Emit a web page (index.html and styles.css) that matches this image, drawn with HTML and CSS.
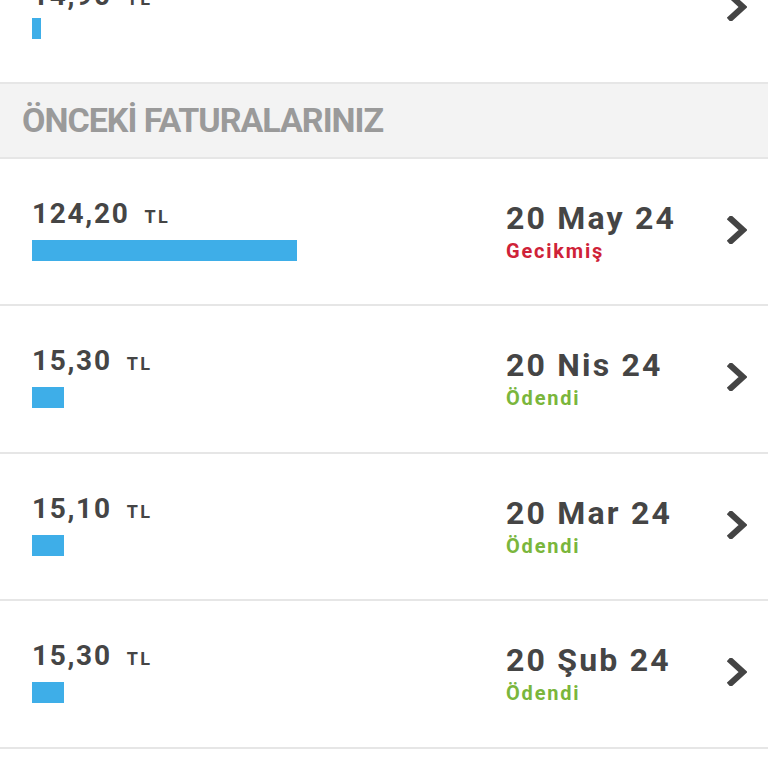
FILE: index.html
```html
<!DOCTYPE html>
<html lang="tr">
<head>
<meta charset="utf-8">
<link rel="stylesheet" href="styles.css">
</head>
<body>
<div class="list">
  <div class="row current">
    <div class="left">
      <div class="amount"><span class="num">14,90</span><span class="cur">TL</span></div>
      <div class="bar" style="width:9px"></div>
    </div>
    <div class="right"></div>
    <svg class="chev" viewBox="0 0 20 28"><path d="M4 3 L16 14 L4 25" /></svg>
  </div>
  <div class="section">ÖNCEKİ FATURALARINIZ</div>
  <div class="row">
    <div class="left">
      <div class="amount"><span class="num">124,20</span><span class="cur">TL</span></div>
      <div class="bar" style="width:265px"></div>
    </div>
    <div class="right">
      <div class="date">20 May 24</div>
      <div class="status late">Gecikmiş</div>
    </div>
    <svg class="chev" viewBox="0 0 20 28"><path d="M4 3 L16 14 L4 25" /></svg>
  </div>
  <div class="row">
    <div class="left">
      <div class="amount"><span class="num">15,30</span><span class="cur">TL</span></div>
      <div class="bar" style="width:32px"></div>
    </div>
    <div class="right">
      <div class="date">20 Nis 24</div>
      <div class="status paid">Ödendi</div>
    </div>
    <svg class="chev" viewBox="0 0 20 28"><path d="M4 3 L16 14 L4 25" /></svg>
  </div>
  <div class="row">
    <div class="left">
      <div class="amount"><span class="num">15,10</span><span class="cur">TL</span></div>
      <div class="bar" style="width:32px"></div>
    </div>
    <div class="right">
      <div class="date">20 Mar 24</div>
      <div class="status paid">Ödendi</div>
    </div>
    <svg class="chev" viewBox="0 0 20 28"><path d="M4 3 L16 14 L4 25" /></svg>
  </div>
  <div class="row">
    <div class="left">
      <div class="amount"><span class="num">15,30</span><span class="cur">TL</span></div>
      <div class="bar" style="width:32px"></div>
    </div>
    <div class="right">
      <div class="date">20 Şub 24</div>
      <div class="status paid">Ödendi</div>
    </div>
    <svg class="chev" viewBox="0 0 20 28"><path d="M4 3 L16 14 L4 25" /></svg>
  </div>
</div>
</body>
</html>
```

FILE: styles.css
```css
html, body {
  margin: 0;
  padding: 0;
  background: #ffffff;
  font-family: Roboto, "Noto Sans", sans-serif;
  color: #454545;
  overflow: hidden;
}
.list {
  margin-top: -64px;
}
.row {
  height: 145.5px;
  border-bottom: 2px solid #e6e6e6;
  display: flex;
  align-items: flex-start;
  padding: 0 21px 0 32px;
}
.left {
  flex: 1;
  display: flex;
  flex-direction: column;
  align-items: flex-start;
  padding-top: 41px;
}
.amount {
  display: flex;
  align-items: baseline;
  height: 28px;
  line-height: 28px;
  margin-bottom: 12px;
}
.current .left {
  padding-top: 46px;
}
.current .amount {
  margin-bottom: 8px;
}
.num {
  font-size: 28px;
  font-weight: 700;
  letter-spacing: 1.7px;
}
.cur {
  font-size: 18px;
  font-weight: 700;
  margin-left: 15px;
  letter-spacing: 2.5px;
}
.bar {
  height: 21px;
  background: #3eaee8;
}
.right {
  width: 221px;
  display: flex;
  flex-direction: column;
  padding-top: 43px;
}
.date {
  font-size: 32px;
  font-weight: 700;
  line-height: 32px;
  letter-spacing: 2.2px;
}
.status {
  font-size: 20px;
  font-weight: 700;
  line-height: 20px;
  margin-top: 7px;
  letter-spacing: 1.8px;
}
.late { color: #cf2238; }
.paid { color: #7ab63c; }
.chev {
  margin-top: 57px;
  width: 20px;
  height: 28px;
  flex: none;
  fill: none;
  stroke: #444444;
  stroke-width: 6;
  stroke-linecap: square;
  stroke-linejoin: miter;
}
.section {
  height: 73px;
  background: #f3f3f3;
  border-bottom: 2px solid #e6e6e6;
  display: flex;
  align-items: center;
  padding-left: 22px;
  font-size: 34px;
  font-weight: 700;
  color: #9a9a9a;
  letter-spacing: -1px;
}
```
